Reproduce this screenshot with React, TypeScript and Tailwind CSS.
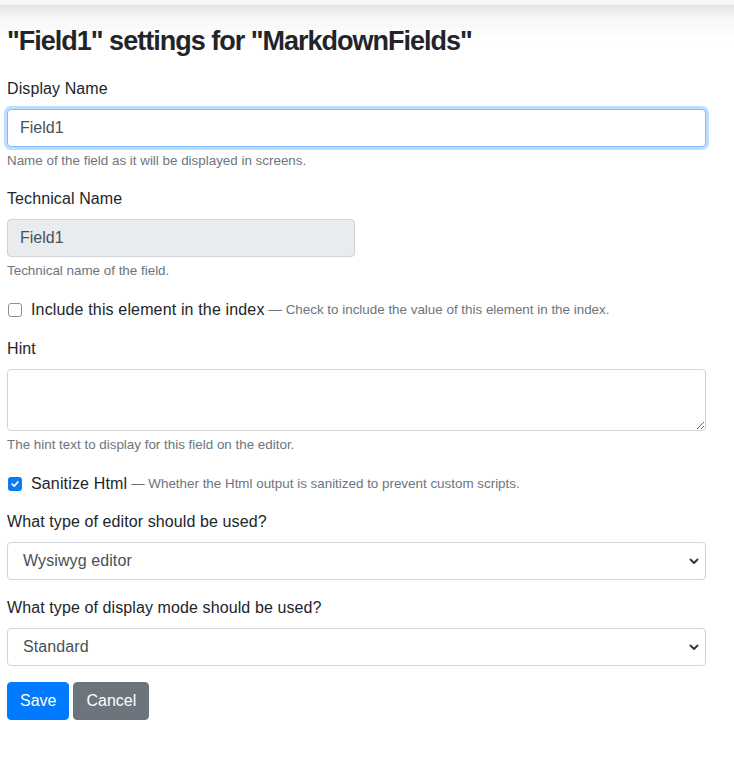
import React from "react";

const Chevron = () => (
  <svg width="10" height="8" viewBox="0 0 10 8" className="pointer-events-none absolute right-[6px] top-1/2 -translate-y-1/2">
    <path d="M1.5 2.5 L5 6 L8.5 2.5" fill="none" stroke="#3a3a3a" strokeWidth="2" strokeLinecap="round" strokeLinejoin="round" />
  </svg>
);

const Select = ({ value }: { value: string }) => (
  <div className="relative h-[38px] w-full rounded-[4px] border border-[#ced4da] bg-white">
    <div className="flex h-full items-center pl-[15px] text-[16px] tracking-[0.1px] text-[#495057]">{value}</div>
    <Chevron />
  </div>
);

const Help = ({ children }: { children: React.ReactNode }) => (
  <div className="mt-[4px] text-[13.4px] leading-[20px] text-[#6c757d]">{children}</div>
);

const Label = ({ children }: { children: React.ReactNode }) => (
  <div className="mb-[8px] text-[16px] leading-[24px] tracking-[0.1px] text-[#212529]">{children}</div>
);

export default function App() {
  return (
    <div className="min-h-[764px] bg-white font-['Liberation_Sans',Arial,sans-serif] text-[#212529]">
      <div className="h-[5px] bg-[#f6f7f9]" />
      <div className="bg-[linear-gradient(to_bottom,#e3e3e3_0px,#f6f6f6_12px,#ffffff_36px)] pl-[7px] pr-[28px]">
        <h2 className="pt-[19px] text-[27px] font-bold leading-[34px] tracking-[-1px] text-[#212529]">
          "Field1" settings for "MarkdownFields"
        </h2>
        <div className="mt-[19px]">
          <Label>Display Name</Label>
          <div className="flex h-[38px] items-center rounded-[4px] border border-[#80bdff] bg-white px-[12px] text-[16px] text-[#495057] shadow-[0_0_0_3px_rgba(0,123,255,0.25)]">
            Field1
          </div>
          <Help>Name of the field as it will be displayed in screens.</Help>
        </div>

        <div className="mt-[16px]">
          <Label>Technical Name</Label>
          <div className="flex h-[38px] w-[348px] items-center rounded-[4px] border border-[#ced4da] bg-[#e9ecef] px-[12px] text-[16px] text-[#495057]">
            Field1
          </div>
          <Help>Technical name of the field.</Help>
        </div>

        <div className="mt-[17px] flex h-[24px] items-center">
          <span className="ml-[1px] h-[14px] w-[14px] rounded-[3px] border border-[#8f8f8f] bg-white" />
          <span className="ml-[9px] text-[16px] leading-[24px] tracking-[0.15px]">Include this element in the index</span>
          <span className="ml-[4px] text-[13.4px] text-[#6c757d]">— Check to include the value of this element in the index.</span>
        </div>

        <div className="mt-[15px]">
          <Label>Hint</Label>
          <textarea
            rows={2}
            className="block h-[62px] w-full rounded-[4px] border border-[#ced4da] bg-white px-[12px] py-[6px] text-[16px] text-[#495057] outline-none"
          />
          <Help>The hint text to display for this field on the editor.</Help>
        </div>

        <div className="mt-[17px] flex h-[24px] items-center">
          <span className="ml-[1px] flex h-[14px] w-[14px] items-center justify-center rounded-[3px] bg-[#0b7cf5]">
            <svg width="10" height="10" viewBox="0 0 10 10">
              <path d="M2.2 5.2 L4.2 7.1 L7.9 3" fill="none" stroke="#ffffff" strokeWidth="1.7" strokeLinecap="round" strokeLinejoin="round" />
            </svg>
          </span>
          <span className="ml-[9px] text-[16px] leading-[24px] tracking-[0.15px]">Sanitize Html</span>
          <span className="ml-[4px] text-[13.4px] text-[#6c757d]">— Whether the Html output is sanitized to prevent custom scripts.</span>
        </div>

        <div className="mt-[14px]">
          <Label>What type of editor should be used?</Label>
          <Select value="Wysiwyg editor" />
        </div>

        <div className="mt-[16px]">
          <Label>What type of display mode should be used?</Label>
          <Select value="Standard" />
        </div>

        <div className="mt-[16px] flex gap-[4px]">
          <button className="h-[38px] rounded-[4px] border border-[#007bff] bg-[#007bff] px-[12px] text-[16px] text-white">Save</button>
          <button className="h-[38px] rounded-[4px] border border-[#6c757d] bg-[#6c757d] px-[12px] text-[16px] text-white">Cancel</button>
        </div>
      </div>
    </div>
  );
}
